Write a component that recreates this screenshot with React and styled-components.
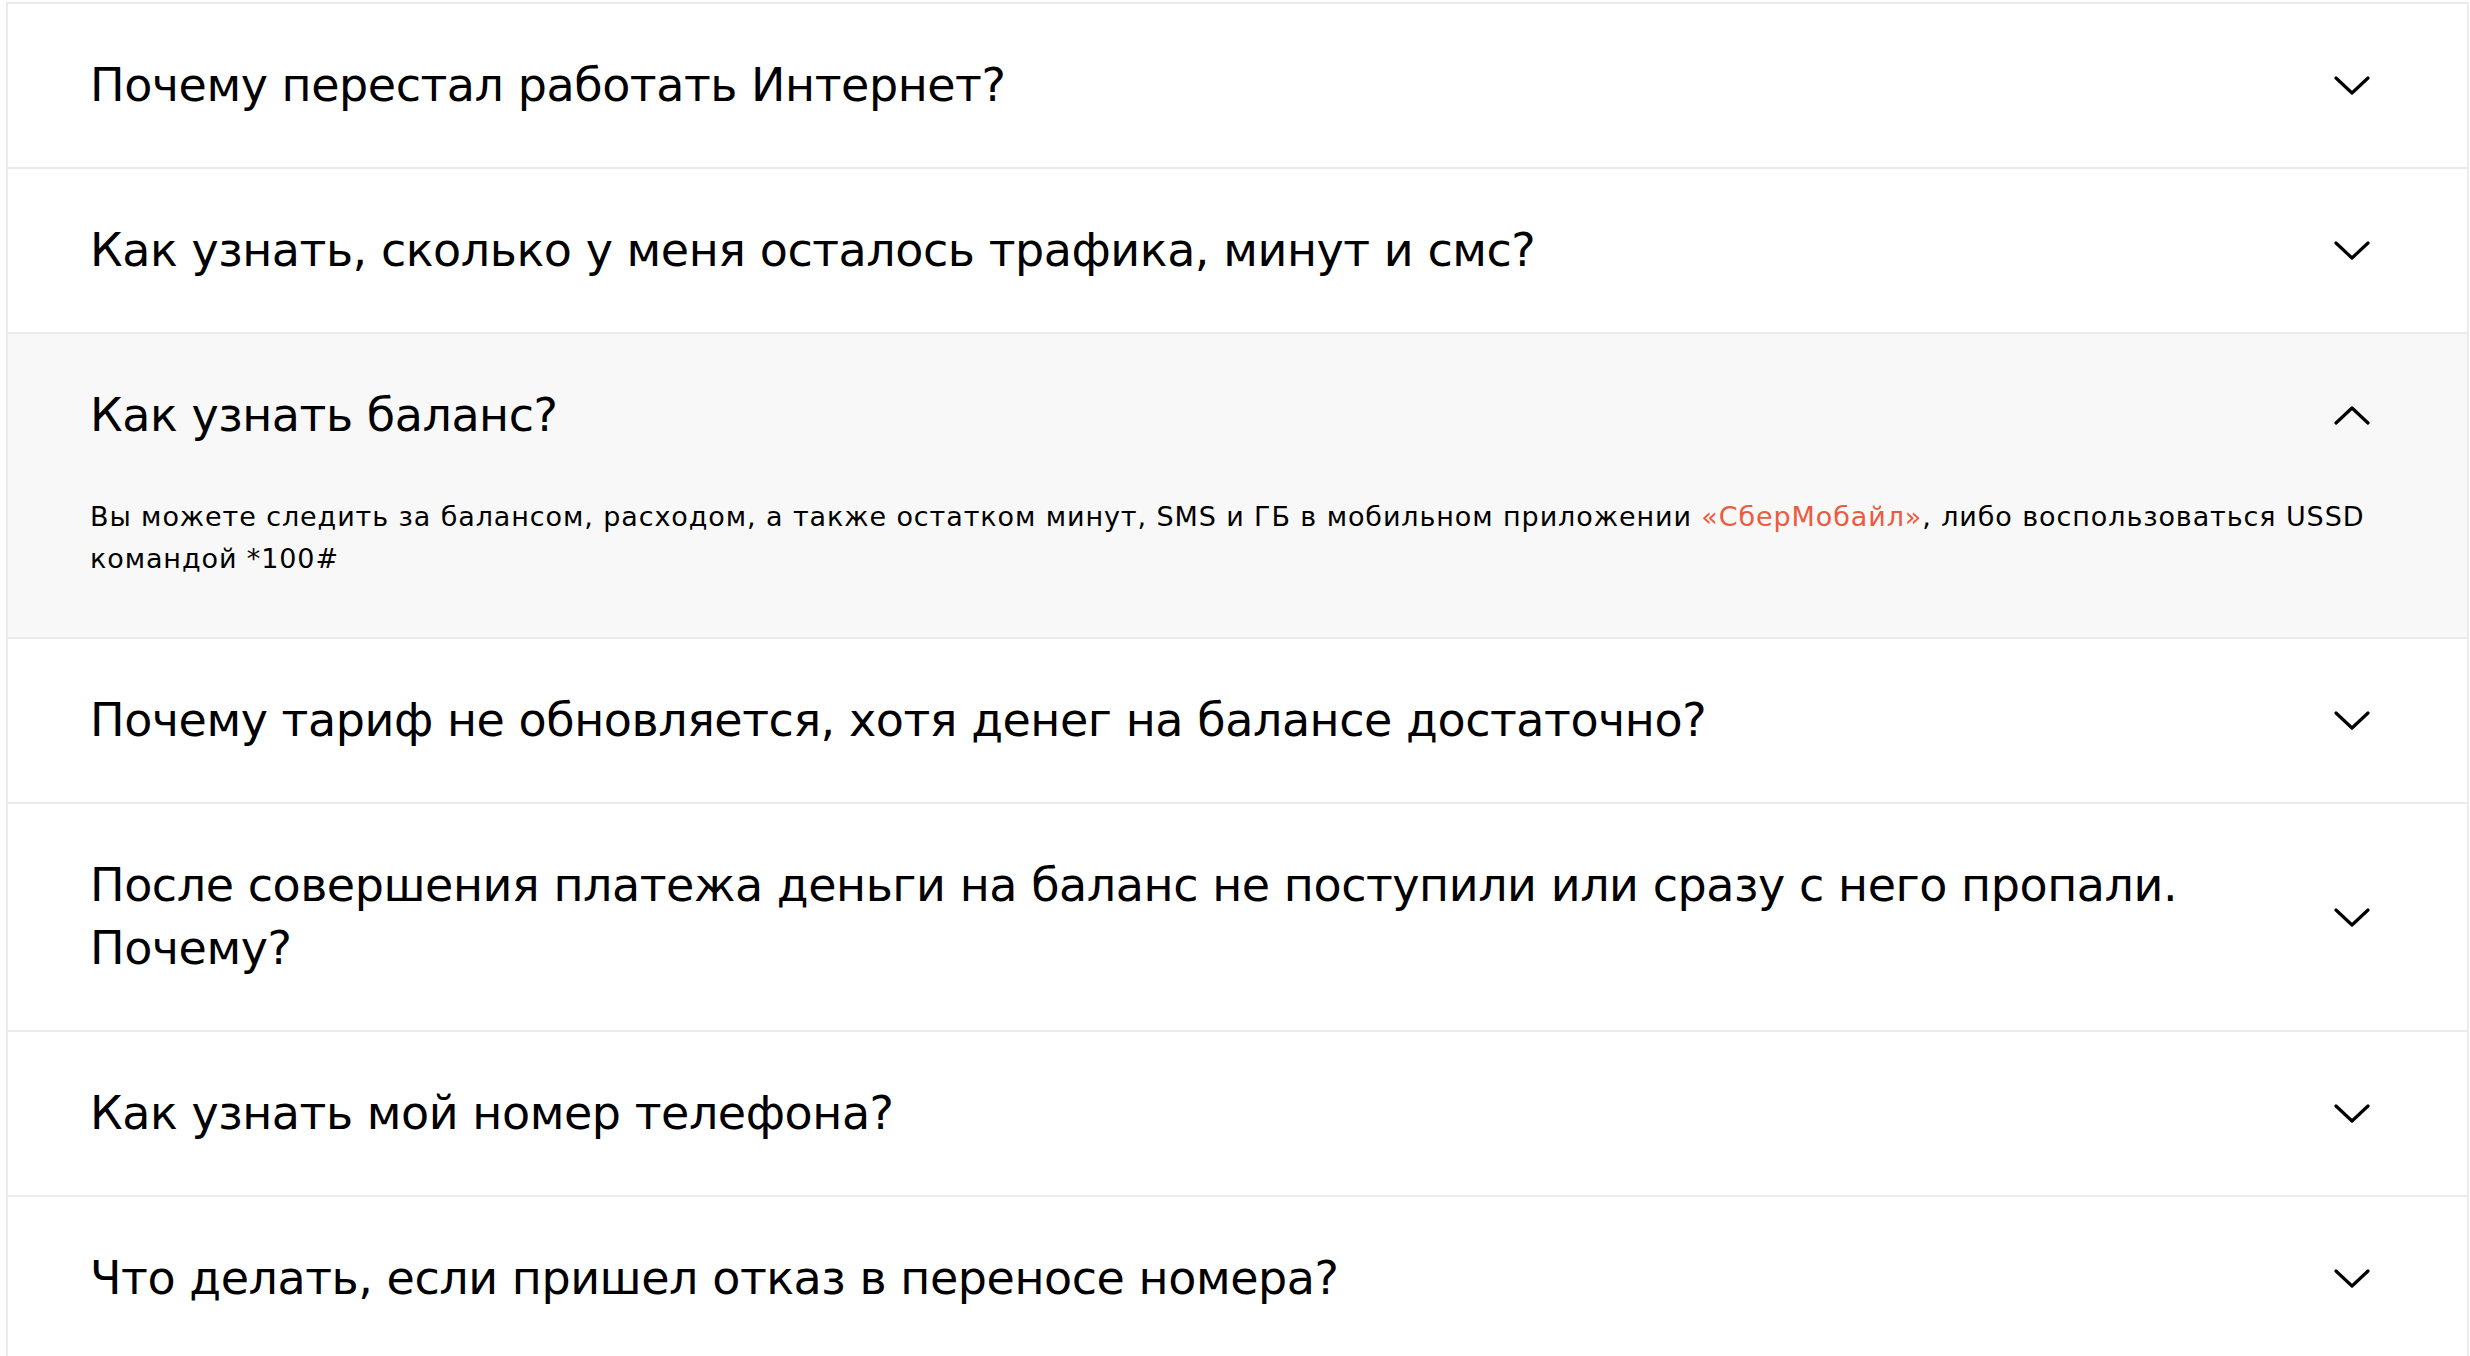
import React, { useState } from "react";
import styled, { createGlobalStyle } from "styled-components";

const GlobalStyle = createGlobalStyle`
  body {
    margin: 0;
    background: #fff;
    font-family: "DejaVu Sans", "Noto Sans", sans-serif;
    color: #000;
  }
`;

const List = styled.div`
  margin: 2px 1px 0 6px;
  border-left: 2px solid #ebebeb;
  border-right: 2px solid #ebebeb;
  border-top: 2px solid #ebebeb;
`;

const Item = styled.div`
  background: ${(p) => (p.$open ? "#f7f8f7" : "#fff")};
  border-bottom: 2px solid #ebebeb;
  padding: 0 97px 0 82px;
`;

const Header = styled.div`
  display: flex;
  align-items: center;
  justify-content: space-between;
  gap: 60px;
  padding: 50px 0;
  cursor: pointer;
`;

const Question = styled.div`
  font-size: 46px;
  line-height: 63px;
  letter-spacing: -0.45px;
`;

const Arrow = styled.svg`
  width: 36px;
  height: 19px;
  flex-shrink: 0;
  transform: ${(p) => (p.$up ? "rotate(180deg)" : "none")};
`;

const Answer = styled.div`
  font-size: 27px;
  line-height: 42px;
  letter-spacing: 0.9px;
  margin-top: -1px;
  padding-bottom: 57px;
`;

const Link = styled.a`
  color: #ee5a3f;
  text-decoration: none;
`;

const faq = [
  { q: "Почему перестал работать Интернет?" },
  { q: "Как узнать, сколько у меня осталось трафика, минут и смс?" },
  {
    q: "Как узнать баланс?",
    a: (
      <>
        Вы можете следить за балансом, расходом, а также остатком минут, SMS и
        ГБ в мобильном приложении <Link href="#">«СберМобайл»</Link>, либо
        воспользоваться USSD командой *100#
      </>
    ),
  },
  { q: "Почему тариф не обновляется, хотя денег на балансе достаточно?" },
  {
    q: "После совершения платежа деньги на баланс не поступили или сразу с него пропали. Почему?",
  },
  { q: "Как узнать мой номер телефона?" },
  { q: "Что делать, если пришел отказ в переносе номера?" },
];

function Chevron({ up }) {
  return (
    <Arrow viewBox="0 0 36 19" $up={up}>
      <polyline
        points="2,2 18,17 34,2"
        fill="none"
        stroke="#000"
        strokeWidth="3.2"
        strokeLinecap="round"
        strokeLinejoin="round"
      />
    </Arrow>
  );
}

export default function App() {
  const [open, setOpen] = useState(2);
  return (
    <>
      <GlobalStyle />
      <List>
        {faq.map((item, i) => (
          <Item key={i} $open={open === i}>
            <Header onClick={() => setOpen(open === i ? -1 : i)}>
              <Question>{item.q}</Question>
              <Chevron up={open === i} />
            </Header>
            {open === i && item.a && <Answer>{item.a}</Answer>}
          </Item>
        ))}
      </List>
    </>
  );
}
